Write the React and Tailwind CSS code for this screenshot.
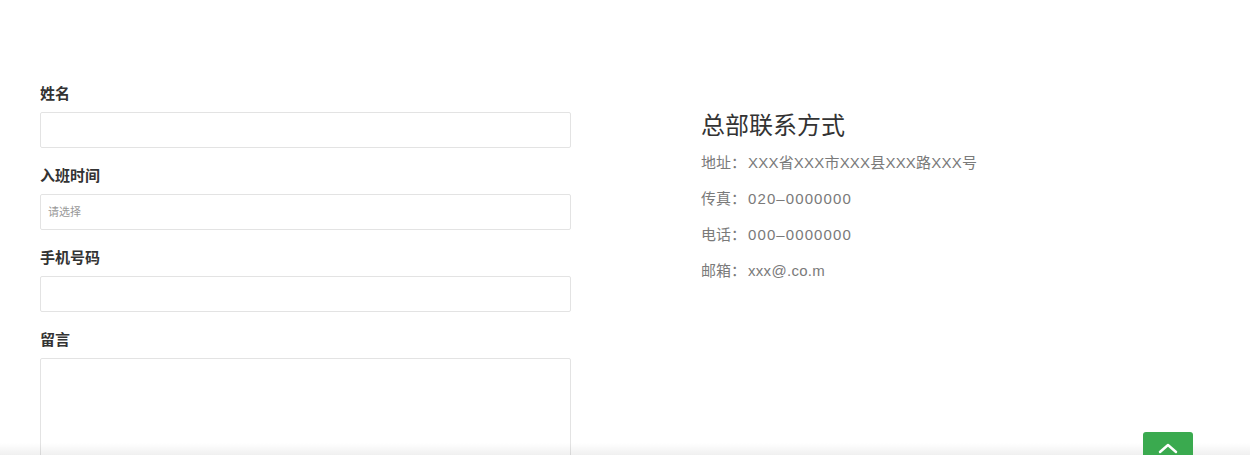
import React from 'react';

const font = { fontFamily: '"Liberation Sans", "Noto Sans CJK SC", sans-serif' };

const Field = ({ label, placeholder, textarea }) => (
  <div className="mb-[18px]">
    <label className="block text-[15px] leading-[20px] font-bold text-[#333] mb-[8px]">{label}</label>
    {textarea ? (
      <textarea className="block w-full h-[130px] border border-[#e3e3e3] rounded-[2px] bg-white outline-none resize-none" />
    ) : (
      <input
        type="text"
        placeholder={placeholder}
        className="block w-full h-[36px] border border-[#e3e3e3] rounded-[2px] bg-white px-[7px] text-[11px] placeholder:text-[#999] outline-none"
      />
    )}
  </div>
);

const App = () => {
  const info = [
    { k: '地址：', v: 'XXX省XXX市XXX县XXX路XXX号', cls: 'tracking-[0.2px]' },
    { k: '传真：', v: '020–0000000', cls: 'tracking-[1.1px]' },
    { k: '电话：', v: '000–0000000', cls: 'tracking-[1.1px]' },
    { k: '邮箱：', v: 'xxx@.co.m', cls: 'tracking-[0.3px]' },
  ];

  return (
    <div className="relative h-[455px] overflow-hidden bg-white" style={font}>
      <div className="flex pl-[40px] pt-[84px]">
        <form className="w-[531px]">
          <Field label="姓名" />
          <Field label="入班时间" placeholder="请选择" />
          <Field label="手机号码" />
          <Field label="留言" textarea />
        </form>

        <div className="ml-[130px] pt-[26px]">
          <h3 className="text-[24px] leading-[32px] text-[#333] mb-[3px]">总部联系方式</h3>
          {info.map((row) => (
            <p key={row.k} className="text-[15px] leading-[36px] text-[#7a7a7a]">
              <span className="mr-[2px]">{row.k}</span>
              <span className={row.cls}>{row.v}</span>
            </p>
          ))}
        </div>
      </div>

      <div className="absolute left-0 right-0 bottom-0 h-[12px] bg-gradient-to-b from-transparent to-black/[0.06]" />

      <button className="absolute left-[1143px] top-[432px] w-[50px] h-[50px] rounded-[3px] bg-[#3aaa4f] flex justify-center pt-[10px]">
        <svg width="20" height="12" viewBox="0 0 20 12" fill="none" stroke="white" strokeWidth="2.5" strokeLinecap="round" strokeLinejoin="round">
          <path d="M2 10 L10 3 L18 10" />
        </svg>
      </button>
    </div>
  );
};

export default App;
